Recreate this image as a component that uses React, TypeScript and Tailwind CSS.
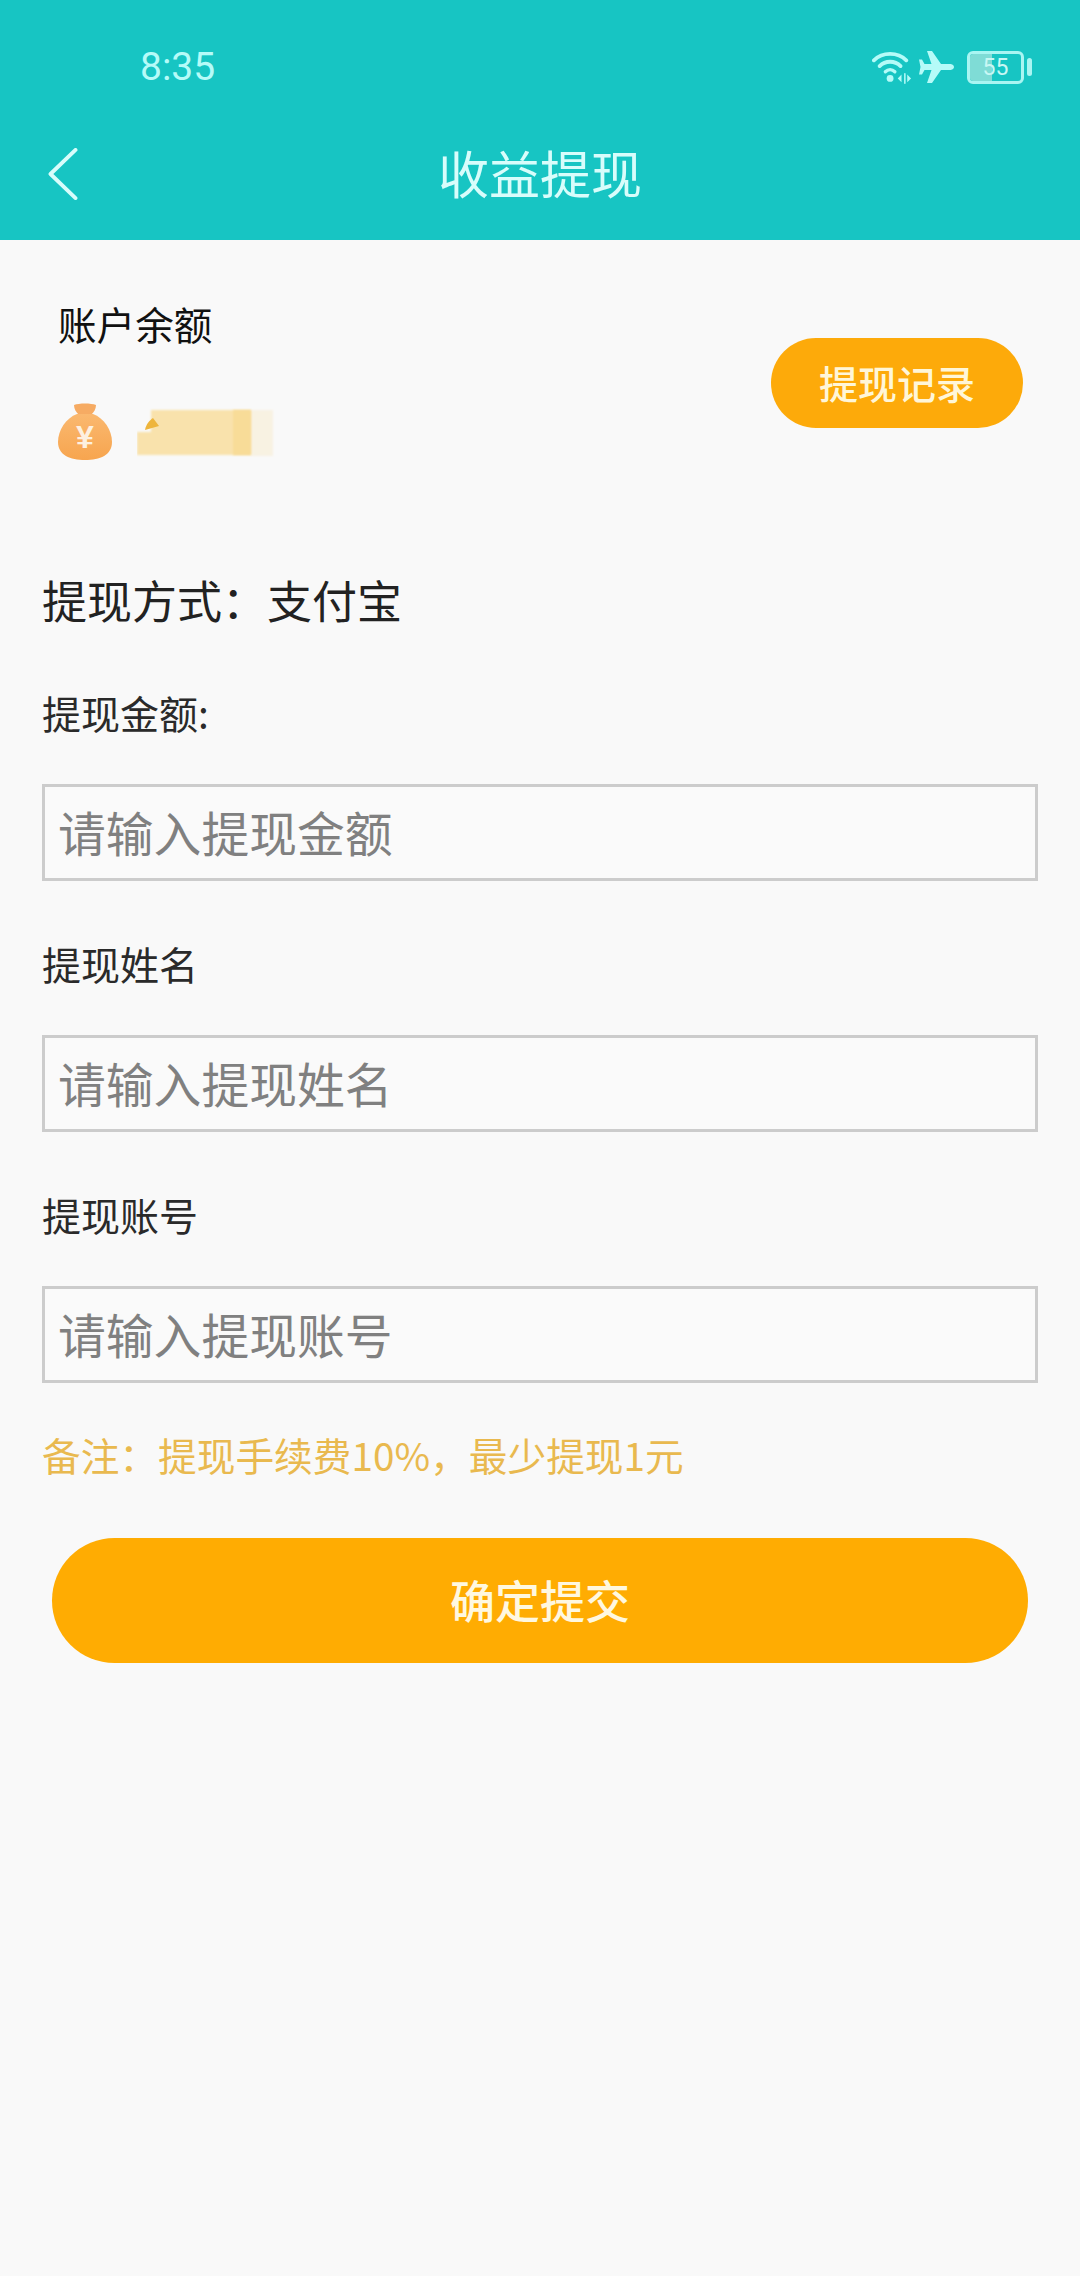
import React from 'react';

const fields = [
  { label: '提现金额:', placeholder: '请输入提现金额' },
  { label: '提现姓名', placeholder: '请输入提现姓名' },
  { label: '提现账号', placeholder: '请输入提现账号' },
];

const StatusIcons = () => (
  <div className="flex items-center">
    <svg width="40" height="34" viewBox="0 0 42 34" fill="none" stroke="#b5fbf8" strokeLinecap="round">
      <path d="M2 10 C 11 1, 27 1, 36 10" strokeWidth="4" />
      <path d="M8 16 C 14 10, 24 10, 30 16" strokeWidth="4" />
      <path d="M14 22 C 17 19, 21 19, 24 22" strokeWidth="3.5" />
      <circle cx="19" cy="29" r="3.6" fill="#b5fbf8" stroke="none" />
      <path d="M31 25 L27 29 L31 33 Z M34.5 24 V34 M37 25 L41 29 L37 33 Z" fill="#b5fbf8" stroke="none" />
      <path d="M34.5 24 V34" strokeWidth="1.6" />
    </svg>
    <svg width="36" height="34" viewBox="0 0 36 34" className="ml-[7px]" fill="#b5fbf8">
      <path d="M35 17 C35 14.5 32 14 30 14 L22 14 L13 1 L8 1 L12.5 14 L5.5 14 L3 9.5 L0 9.5 L1.5 17 L0 24.5 L3 24.5 L5.5 20 L12.5 20 L8 33 L13 33 L22 20 L30 20 C32 20 35 19.5 35 17 Z" />
    </svg>
    <div className="relative ml-[12px] h-[33px] w-[57px] overflow-hidden rounded-[6px] border-[3px] border-[#a9f5f2]">
      <div className="h-full w-[22px] bg-[#7fdcd6]"></div>
      <span className="absolute inset-0 flex items-center justify-center font-['Roboto',sans-serif] text-[23px] leading-none text-[#c9f7f4]">
        55
      </span>
    </div>
    <div className="ml-[3px] h-[18px] w-[5px] rounded-full bg-[#a9f5f2]"></div>
  </div>
);

const MoneyBag = () => (
  <svg width="54" height="57" viewBox="0 0 54 57">
    <defs>
      <linearGradient id="bag" x1="0" y1="0" x2="0" y2="1">
        <stop offset="0" stopColor="#fab86f" />
        <stop offset="1" stopColor="#f7a54f" />
      </linearGradient>
    </defs>
    <path d="M16 2 C21 0 33 0 38 2 C38 6 36 9 33 12 L21 12 C18 9 16 6 16 2 Z" fill="#f6ab63" />
    <path d="M19 11 L35 11 C46 15 54 27 54 39 C54 52 42 57 27 57 C12 57 0 52 0 39 C0 27 8 15 19 11 Z" fill="url(#bag)" />
    <text x="27" y="45" textAnchor="middle" fontSize="32" fontWeight="700" fill="#fdf0e0" fontFamily="'Liberation Sans', sans-serif">¥</text>
  </svg>
);

const BlurredAmount = () => (
  <svg width="170" height="60" viewBox="0 0 170 60" className="ml-[25px] mt-[1px]">
    <defs>
      <filter id="soft">
        <feGaussianBlur stdDeviation="1" />
      </filter>
    </defs>
    <rect x="114" y="6" width="22" height="46" fill="#f8f2e2" filter="url(#soft)" />
    <path d="M14 6 H114 V51 H0 V28 H14 Z" fill="#f9e2ac" filter="url(#soft)" />
    <rect x="96" y="6" width="18" height="45" fill="#f8dc98" filter="url(#soft)" />
    <path d="M8 26 C9 20 13 16 16 14 L22 22 Z" fill="#eeb53c" />
  </svg>
);

export default function App() {
  return (
    <div className="min-h-[2276px] w-[1080px] bg-[#f9f9f9] font-['Noto_Sans_CJK_SC',sans-serif] text-[#222]">
      <header className="h-[240px] bg-[#17c5c3]">
        <div className="flex items-center justify-between pl-[140px] pr-[48px] pt-[44px]">
          <span className="text-[39px] leading-[46px] text-[#b5fbf8] font-['Roboto',sans-serif]">8:35</span>
          <StatusIcons />
        </div>
        <div className="relative mt-[54px] flex h-[60px] items-center justify-center">
          <svg width="32" height="52" viewBox="0 0 32 54" fill="none" stroke="#d8fdfb" strokeWidth="4" strokeLinecap="round" strokeLinejoin="round" className="absolute left-[47px] top-[4px]">
            <path d="M29 2 L3 27 L29 52" />
          </svg>
          <h1 className="pb-[4px] text-[51px] font-normal leading-[60px] text-[#d8fdfb]">收益提现</h1>
        </div>
      </header>

      <section className="flex items-start justify-between pl-[58px] pr-[57px]">
        <div className="pt-[58px]">
          <div className="text-[38.6px] leading-[50px] text-[#111]">账户余额</div>
          <div className="mt-[55px] flex h-[57px] items-start">
            <MoneyBag />
            <BlurredAmount />
          </div>
        </div>
        <button className="mt-[98px] h-[90px] w-[252px] rounded-full bg-[#fdaa0a] pb-[2px] text-[39px] font-medium text-[#fff6d8]">
          提现记录
        </button>
      </section>

      <main className="px-[42px]">
        <div className="mt-[111px] text-[45px] leading-[58px] text-[#222]">提现方式：支付宝</div>
        <div className="mt-[58px] flex flex-col gap-[57px]">
          {fields.map((f) => (
            <label key={f.label} className="block">
              <span className="block text-[39px] leading-[50px] text-[#2a2a2a]">{f.label}</span>
              <input
                placeholder={f.placeholder}
                className="mt-[47px] block h-[97px] w-full border-[3px] border-[#cccccc] bg-[#fafafa] px-[13px] pb-[2px] text-[47.8px] outline-none placeholder:text-[#808080]"
              />
            </label>
          ))}
        </div>
        <p className="mt-[47px] text-[38.7px] leading-[48px] text-[#e9b94f]">备注：提现手续费10%，最少提现1元</p>
        <button className="mx-[10px] mt-[60px] block h-[125px] w-[976px] rounded-full bg-[#ffac02] pb-[2px] text-[45px] font-medium text-[#fff8e0]">
          确定提交
        </button>
      </main>
    </div>
  );
}
